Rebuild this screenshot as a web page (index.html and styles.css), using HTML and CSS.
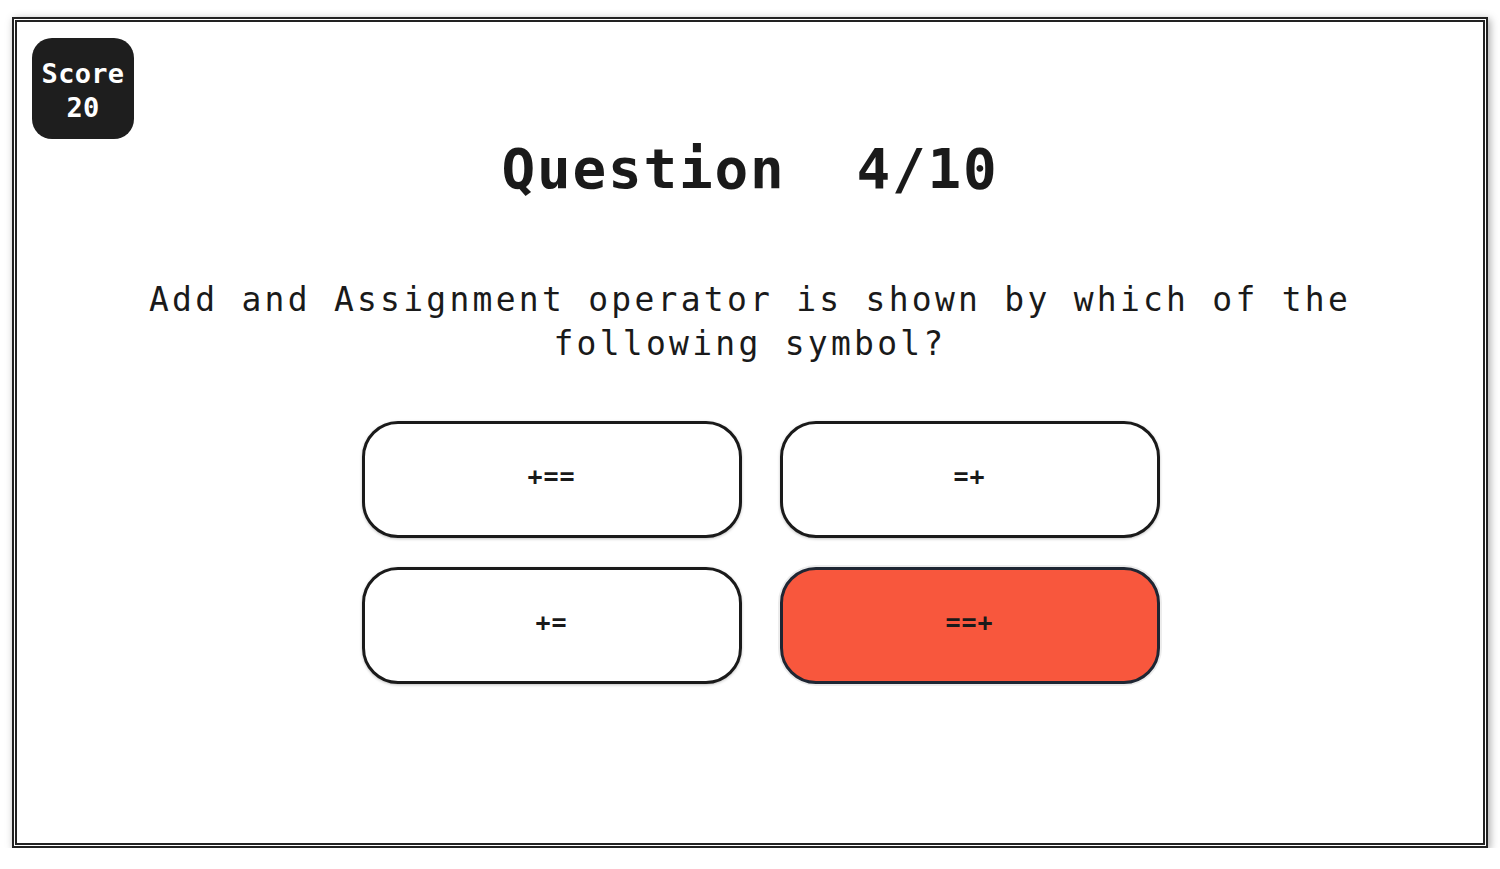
FILE: index.html
```html
<!DOCTYPE html>
<html lang="en">
<head>
<meta charset="utf-8">
<title>Quiz</title>
<link rel="stylesheet" href="styles.css">
</head>
<body>
<div class="frame">
  <div class="score">Score<br>20</div>
  <h1 class="title">Question&nbsp;&nbsp;4/10</h1>
  <p class="question">Add and Assignment operator is shown by which of the following symbol?</p>
  <div class="answers">
    <button class="answer">+==</button>
    <button class="answer">=+</button>
    <button class="answer">+=</button>
    <button class="answer wrong">==+</button>
  </div>
</div>
</body>
</html>
```
FILE: styles.css
```css
html, body {
  margin: 0;
  padding: 0;
  background: #ffffff;
}
body {
  padding: 17px 12px 0 12px;
  font-family: "DejaVu Sans Mono", "Liberation Mono", monospace;
  color: #1a1a1a;
}
.frame {
  box-sizing: border-box;
  height: 831px;
  border: 5px double #222;
  box-shadow: 2px 2px 8px rgba(0, 0, 0, 0.35);
  display: flex;
  flex-direction: column;
  align-items: center;
}
.score {
  align-self: flex-start;
  margin: 16px 0 0 15px;
  width: 102px;
  height: 101px;
  box-sizing: border-box;
  padding-top: 4px;
  border-radius: 20px;
  background: #1e1e1e;
  color: #ffffff;
  font-weight: bold;
  font-size: 27px;
  line-height: 34px;
  text-align: center;
  display: flex;
  align-items: center;
  justify-content: center;
  letter-spacing: 0.3px;
}
.title {
  margin: 2px 0 0 0;
  font-size: 56px;
  line-height: 56px;
  font-weight: bold;
  letter-spacing: 1.8px;
  color: #1a1a1a;
}
.question {
  margin: 81px 0 0 0;
  width: 1260px;
  font-size: 33px;
  line-height: 44px;
  letter-spacing: 3.25px;
  text-align: center;
  color: #1a1a1a;
}
.answers {
  margin: 55px 0 0 21px;
  display: grid;
  grid-template-columns: 380px 380px;
  grid-auto-rows: 117px;
  column-gap: 38px;
  row-gap: 29px;
}
.answer {
  box-sizing: border-box;
  border: 3px solid #1a1a1a;
  border-radius: 36px;
  background: #ffffff;
  box-shadow: 0 1px 3px rgba(0, 0, 0, 0.25);
  font-family: "DejaVu Sans Mono", "Liberation Mono", monospace;
  font-weight: bold;
  font-size: 25px;
  letter-spacing: 1px;
  color: #1a1a1a;
  padding: 0 0 7px 0;
}
.answer.wrong {
  background: #f8573d;
  border-color: #1f2633;
  box-shadow: 0 0 0 2px #ececec;
}
```
